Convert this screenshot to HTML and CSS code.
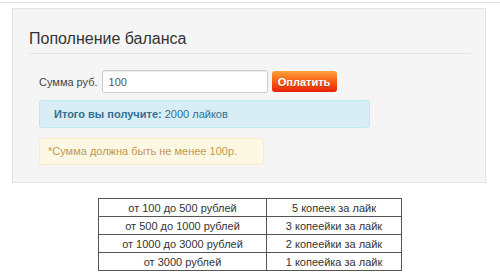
FILE: index.html
```html
<!DOCTYPE html>
<html lang="ru">

<head>
    <meta charset="UTF-8">
    <title>Пополнение баланса</title>
    <link rel="stylesheet" href="styles.css">
</head>

<body>
    <div class="topline"></div>
    <div class="well">
        <h3 class="title">Пополнение баланса</h3>
        <div class="pay-row">
            <label for="sum">Сумма руб.</label>
            <input id="sum" type="text" value="100">
            <button id="pay-btn">Оплатить</button>
        </div>
        <div class="alert info"><b>Итого вы получите:</b> 2000 лайков</div>
        <div class="alert warn">*Сумма должна быть не менее 100р.</div>
    </div>
    <table class="prices">
        <tr><td>от 100 до 500 рублей</td><td>5 копеек за лайк</td></tr>
        <tr><td>от 500 до 1000 рублей</td><td>3 копеейки за лайк</td></tr>
        <tr><td>от 1000 до 3000 рублей</td><td>2 копеейки за лайк</td></tr>
        <tr><td>от 3000 рублей</td><td>1 копеейка за лайк</td></tr>
    </table>
</body>

</html>
```

FILE: styles.css
```css
*{
    margin: 0;
    padding: 0;
    box-sizing: border-box;
}
body{
    font-family: "Liberation Sans", Arial, sans-serif;
    font-size: 11px;
    color: #333;
    background: #fff;
}
.topline{
    height: 3px;
    border-bottom: 1px solid #e3e3e3;
}
.well{
    margin: 5px 14px 0 12px;
    height: 175px;
    background: #f5f5f5;
    border: 1px solid #e3e3e3;
    padding: 19px 14px 0 16px;
}
.title{
    font-weight: normal;
    font-size: 16px;
    color: #333;
    line-height: 22px;
    padding-bottom: 3px;
    border-bottom: 1px solid #e5e5e5;
}
.pay-row{
    display: flex;
    align-items: center;
    margin: 16px 0 0 10px;
    height: 23px;
}
.pay-row label{
    margin-right: 4px;
    color: #444;
}
#sum{
    width: 166px;
    height: 23px;
    border: 1px solid #ccc;
    border-radius: 3px;
    padding: 0 6px;
    font-family: inherit;
    font-size: 11px;
    color: #555;
    background: #fff;
    box-shadow: inset 0 1px 1px rgba(0,0,0,.075);
}
#pay-btn{
    margin-left: 4px;
    width: 65px;
    height: 21px;
    border: none;
    border-radius: 3px;
    background: linear-gradient(#fca03a, #f65a10 55%, #e8200a);
    color: #fff;
    font-family: inherit;
    font-weight: bold;
    font-size: 11px;
    text-shadow: 0 1px 1px rgba(0,0,0,.2);
}
.alert{
    margin-left: 10px;
    border-radius: 3px;
    border: 1px solid transparent;
    padding: 0 14px;
    line-height: 26px;
}
.info{
    margin-top: 7px;
    width: 331px;
    background: #d9edf7;
    border-color: #bce8f1;
    color: #31708f;
}
.warn{
    margin-top: 10px;
    width: 225px;
    background: #fcf8e3;
    border-color: #faebcc;
    color: #c09853;
    line-height: 25px;
    padding: 0 8px;
}
.prices{
    border-collapse: collapse;
    margin: 15px 0 0 98px;
    width: 304px;
    border: 1px solid #333;
    font-size: 11px;
    color: #333;
}
.prices td{
    border: 1px solid #555;
    text-align: center;
    height: 18px;
    padding: 0;
}
.prices td:first-child{
    width: 168px;
}
```
